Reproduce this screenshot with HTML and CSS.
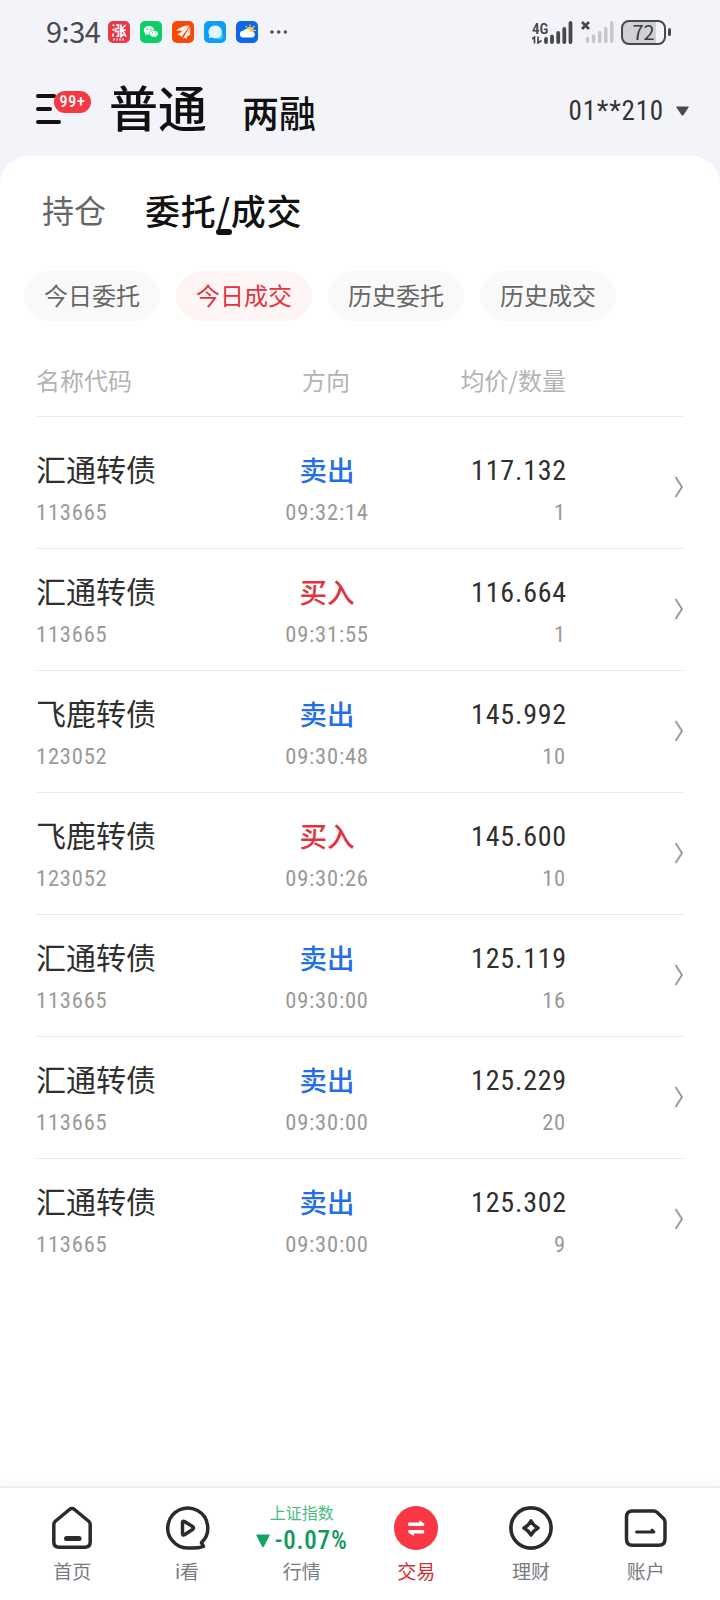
FILE: index.html
```html
<!DOCTYPE html>
<html lang="zh-CN">
<head>
    <meta charset="UTF-8">
    <meta name="viewport" content="width=device-width, initial-scale=1.0">
    <title>今日成交</title>
    <link rel="stylesheet" href="styles.css">
</head>
<body>
    <div class="statusbar">
        <span class="clock">9:34</span>
        <div class="apps">
            <svg width="22" height="22" viewBox="0 0 22 22"><rect width="22" height="22" rx="5" fill="#e83849"/><path d="M5 3.500l1 1.500M8 4h2.500v3.500h-3v3h3v4.500l-2 .5M4.500 8l1.500 1.500M5 15.500v-3M13 3.500v12l2.500-2M17.500 4L13 8.500M11.500 9h6.500M14.500 9.500l3.500 6" stroke="#fff" stroke-width="1.700" fill="none"/><path d="M5 18.500h12" stroke="#ffc5c9" stroke-width="2" stroke-dasharray="2 1"/></svg>
            <svg width="22" height="22" viewBox="0 0 22 22"><rect width="22" height="22" rx="5" fill="#0bce66"/><path d="M9 5c-3 0-5.200 1.900-5.200 4.300 0 1.400.7 2.600 1.900 3.400l-.5 1.700 2-1c3.800.9 7-1.100 7-4.100C14.200 6.900 12 5 9 5z" fill="#fff"/><path d="M14 9.200c-2.600 0-4.500 1.600-4.500 3.600 0 2.300 2.700 4 5.700 3.300l1.600.8-.4-1.400c1.200-.7 1.900-1.700 1.900-2.800 0-2-1.900-3.500-4.300-3.500z" fill="#fff" stroke="#0bce66" stroke-width=".7"/><g fill="#0bce66"><circle cx="7.300" cy="8.300" r=".8"/><circle cx="10.700" cy="8.300" r=".8"/><circle cx="12.600" cy="11.800" r=".6"/><circle cx="15.600" cy="11.800" r=".6"/></g></svg>
            <svg width="22" height="22" viewBox="0 0 22 22"><rect width="22" height="22" rx="5" fill="#f94803"/><path d="M4 10Q9 4.500 17.500 4.500L10 10Q7 8.800 4 10z M5.500 13.500L17.500 5L9.500 16Q8.500 13.500 5.500 13.500z M11 17.500L17.800 5.500L14.500 18Q13 16.500 11 17.500z M15.500 15L18.200 6V14z" fill="#fff"/></svg>
            <svg width="22" height="22" viewBox="0 0 22 22"><rect width="22" height="22" rx="5" fill="#0c9cfb"/><circle cx="15.500" cy="15" r="3.500" fill="#35cefb"/><path d="M11 4.500a6.500 6.500 0 0 0-5.500 10l-.8 2.700 3-.9A6.500 6.500 0 1 0 11 4.500z" fill="#e3f5ff"/></svg>
            <svg width="22" height="22" viewBox="0 0 22 22"><rect width="22" height="22" rx="5" fill="#0c67ec"/><path d="M14 3.500v2M18.500 5l-1.500 1.500M20 9.500h-2M9.500 5l1.500 1.500" stroke="#f6cd50" stroke-width="1.200"/><circle cx="14" cy="9.500" r="3.800" fill="#fbc545"/><path d="M7.500 16.500a3.400 3.400 0 0 1-.3-6.800 4.300 4.300 0 0 1 7.600 1.300 2.900 2.900 0 1 1 .7 5.500z" fill="#fff"/></svg>
        </div>
        <svg class="more" width="20" height="6" viewBox="0 0 20 6"><g fill="#505154"><circle cx="3" cy="3" r="1.800"/><circle cx="9.700" cy="3" r="1.800"/><circle cx="16.400" cy="3" r="1.800"/></g></svg>
        <div class="signals">
            <div class="net">
                <span class="num">4G</span>
                <svg width="10" height="8" viewBox="0 0 10 8"><path d="M0 3l2.500-2v6.500M6 .5v6.500L9.500 4.500" stroke="#48494c" stroke-width="1.700" fill="none"/></svg>
            </div>
            <svg class="bars" width="30" height="23" viewBox="0 0 30 23"><path d="M2 18v3M8 15.500v5.500M14.200 12v9M20.300 8v13M26.500 2v19" stroke="#48494c" stroke-width="3.800" stroke-linecap="round"/></svg>
            <svg class="nosim" width="34" height="24" viewBox="0 0 34 24"><path d="M2 2l7 7M9 2L2 9" stroke="#48494c" stroke-width="2.800"/><path d="M7.500 18.500v3M13.600 16v5.500M19.700 12.500v9M25.800 8.500v13M31.800 2.500v19" stroke="#c7c8cb" stroke-width="3.500" stroke-linecap="round"/></svg>
            <div class="battery"><span>72</span></div>
            <i class="battery-cap"></i>
        </div>
    </div>

    <header class="header">
        <div class="menu">
            <svg width="27" height="32" viewBox="0 0 27 32"><path d="M2 3h16M2 16h12M2 29h21" stroke="#111" stroke-width="4" stroke-linecap="round"/></svg>
            <span class="badge num">99+</span>
        </div>
        <h1>普通</h1>
        <h2>两融</h2>
        <div class="account">
            <span class="num">01**210</span>
            <svg width="13" height="10" viewBox="0 0 13 10"><path d="M1 .5h11q1 0 .5 1L7.500 9q-1 1-2 0L.5 1.500Q0 .5 1 .5z" fill="#4a4b4d"/></svg>
        </div>
    </header>

    <main class="panel">
        <div class="tabs">
            <span class="tab">持仓</span>
            <span class="tab active">委托/成交</span>
        </div>
        <div class="filters">
            <span class="chip">今日委托</span>
            <span class="chip selected">今日成交</span>
            <span class="chip">历史委托</span>
            <span class="chip">历史成交</span>
        </div>

        <div class="list">
            <div class="list-head">
                <span>名称代码</span>
                <span class="center">方向</span>
                <span class="right">均价/数量</span>
            </div>
            <div id="rows" class="rows"></div>
        </div>
    </main>

    <nav class="tabbar">
        <div class="nav-item">
            <svg width="44" height="44" viewBox="0 0 44 44" fill="none" stroke="#2b2b2b" stroke-width="3.500" stroke-linejoin="round" stroke-linecap="round"><path d="M19.500 3.500Q22 1.500 24.500 3.500L39 15.500Q40.200 16.600 40.200 18.500V36Q40.200 41.200 35 41.200H9Q3.800 41.200 3.800 36V18.500Q3.800 16.600 5 15.500z"/><path d="M16.500 32.500h12.500" stroke-width="5"/></svg>
            <span>首页</span>
        </div>
        <div class="nav-item">
            <svg width="46" height="44" viewBox="0 0 46 44" fill="none" stroke="#2b2b2b" stroke-width="3.500" stroke-linejoin="round" stroke-linecap="round"><path d="M37.800 36.300A20 20 0 1 0 25 42Q34 42.500 39.500 40.300L37.500 36.800"/><path d="M18.500 16.500Q18.500 14.500 20.500 15.500L28.500 20.500Q30.500 22 28.500 23.500L20.500 28.800Q18.500 29.800 18.500 27.500z"/></svg>
            <span>i看</span>
        </div>
        <div class="nav-item market">
            <span class="index-name">上证指数</span>
            <span class="index-rate num"><svg width="14" height="14" viewBox="0 0 14 14"><path d="M1 .5h12q1 0 .6 1L8 12.500q-1 1.500-2 0L.4 1.500Q0 .5 1 .5z" fill="#10a660"/></svg>-0.07%</span>
            <span>行情</span>
        </div>
        <div class="nav-item current">
            <svg width="44" height="44" viewBox="0 0 44 44"><circle cx="22" cy="22" r="22" fill="#fa3745"/><path d="M14.500 16.500h11v-2.500l4.500 3.500q1 2.500-1 2.500H14.500q-1-1.700 0-3.500zM15 24h14.500q1.500 1.700 0 3.500H20v2.500l-4.500-2.500Q13 25 15 24z" fill="#fff"/></svg>
            <span>交易</span>
        </div>
        <div class="nav-item">
            <svg width="44" height="44" viewBox="0 0 44 44" fill="none" stroke="#2b2b2b" stroke-width="3.600" stroke-linejoin="round"><circle cx="22" cy="22" r="20.100"/><path d="M22 15Q24.500 19.500 29 22Q24.500 24.500 22 29Q19.500 24.500 15 22Q19.500 19.500 22 15z"/></svg>
            <span>理财</span>
        </div>
        <div class="nav-item">
            <svg width="44" height="44" viewBox="0 0 44 44" fill="none" stroke="#2b2b2b" stroke-width="3.500" stroke-linejoin="round" stroke-linecap="round"><path d="M8.500 5H29.500Q31.500 5 33 6.300L39.500 12.500Q41 14 41 16V33Q41 39.300 34.700 39.300H8.500Q2.500 39.300 2.500 33V11Q2.500 5 8.500 5z"/><path d="M12.500 26h17.500l-2-2" stroke-width="2.800"/></svg>
            <span>账户</span>
        </div>
    </nav>

    <script>
        const trades = [
            { name: "汇通转债", code: "113665", side: "卖出", time: "09:32:14", price: "117.132", qty: 1 },
            { name: "汇通转债", code: "113665", side: "买入", time: "09:31:55", price: "116.664", qty: 1 },
            { name: "飞鹿转债", code: "123052", side: "卖出", time: "09:30:48", price: "145.992", qty: 10 },
            { name: "飞鹿转债", code: "123052", side: "买入", time: "09:30:26", price: "145.600", qty: 10 },
            { name: "汇通转债", code: "113665", side: "卖出", time: "09:30:00", price: "125.119", qty: 16 },
            { name: "汇通转债", code: "113665", side: "卖出", time: "09:30:00", price: "125.229", qty: 20 },
            { name: "汇通转债", code: "113665", side: "卖出", time: "09:30:00", price: "125.302", qty: 9 }
        ];

        document.getElementById('rows').innerHTML = trades.map(t => `
            <div class="row">
                <div class="cell">
                    <span class="name">${t.name}</span>
                    <span class="sub num">${t.code}</span>
                </div>
                <div class="cell center">
                    <span class="side ${t.side === "买入" ? "buy" : "sell"}">${t.side}</span>
                    <span class="sub num">${t.time}</span>
                </div>
                <div class="cell right">
                    <span class="price num">${t.price}</span>
                    <span class="sub num">${t.qty}</span>
                </div>
                <svg class="arrow" width="10" height="22" viewBox="0 0 10 22"><path d="M1.500 1l6.500 10-6.500 10" stroke="#999" stroke-width="1.900" fill="none"/></svg>
            </div>`).join('');
    </script>
</body>
</html>
```

FILE: styles.css
```css
* {
    box-sizing: border-box;
}

body {
    margin: 0;
    height: 1600px;
    display: flex;
    flex-direction: column;
    overflow: hidden;
    background-color: #f3f4f9;
    color: #111;
    font-family: "Noto Sans CJK SC", sans-serif;
}

svg {
    display: block;
    flex: none;
}

.num {
    font-family: Roboto, "Noto Sans CJK SC", sans-serif;
    font-stretch: 87%;
    letter-spacing: 0.8px;
}

/* status bar */
.statusbar {
    height: 64px;
    padding: 0 49px 0 46px;
    display: flex;
    align-items: center;
}

.clock {
    width: 62px;
    font-size: 29px;
    line-height: 60px;
    height: 64px;
    letter-spacing: -0.5px;
    color: #48494c;
}

.apps {
    display: flex;
    gap: 10px;
}

.more {
    margin-left: 11px;
}

.signals {
    margin-left: auto;
    display: flex;
    align-items: center;
}

.net {
    width: 12px;
    line-height: 14px;
    color: #48494c;
}

.net .num {
    font-size: 15px;
    font-weight: 600;
    letter-spacing: 0;
}

.nosim {
    margin: 0 7px 0 6px;
}

.battery {
    width: 45px;
    height: 25px;
    border: 2px solid #48494c;
    border-radius: 8px;
    background: linear-gradient(90deg, #d0d1d4 80%, #f3f4f9 80%);
    font-size: 20px;
    line-height: 19px;
    text-align: center;
    color: #38393c;
}

.battery-cap {
    width: 3px;
    height: 8px;
    margin-left: 2px;
    border-radius: 2px;
    background-color: #48494c;
}

/* header */
.header {
    height: 92px;
    padding: 0 31px 0 36px;
    display: flex;
}

.menu {
    position: relative;
    width: 73px;
    padding-top: 29px;
}

.badge {
    position: absolute;
    left: 18px;
    top: 27px;
    width: 37px;
    height: 22px;
    border-radius: 11px;
    background-color: #f43945;
    color: #fff;
    font-size: 16px;
    font-weight: 500;
    line-height: 22px;
    text-align: center;
}

h1, h2 {
    margin: 0;
    font-weight: 500;
}

h1 {
    font-size: 49px;
    line-height: 83px;
}

h2 {
    margin-left: 35px;
    font-size: 37px;
    line-height: 97px;
}

.account {
    margin-left: auto;
    height: 94px;
    display: flex;
    align-items: center;
    gap: 12px;
    font-size: 27px;
    color: #333;
}

.account svg {
    margin-top: -1px;
}

/* main panel */
.panel {
    flex: 1;
    border-radius: 28px 28px 0 0;
    background-color: #fff;
}

.tabs {
    height: 115px;
    padding-left: 42px;
    display: flex;
    gap: 39px;
}

.tab {
    font-size: 32px;
    line-height: 107px;
    color: #666;
}

.tab.active {
    position: relative;
    font-size: 35px;
    font-weight: 500;
    letter-spacing: 0.7px;
    color: #111;
}

.tab.active::after {
    content: "";
    position: absolute;
    left: 50%;
    top: 73px;
    width: 16px;
    height: 6px;
    margin-left: -8px;
    border-radius: 3px;
    background-color: #111;
}

.filters {
    padding-left: 24px;
    display: flex;
    gap: 16px;
}

.chip {
    width: 136px;
    height: 50px;
    border-radius: 25px;
    background-color: #f9f9f9;
    font-size: 24px;
    line-height: 47px;
    text-align: center;
    color: #666;
}

.chip.selected {
    background-color: #fff5f4;
    color: #e0343f;
}

.list {
    padding: 0 36px;
}

.list-head,
.row {
    display: grid;
    grid-template-columns: 190px 200px 140px 1fr;
}

.list-head {
    height: 96px;
    padding-top: 37px;
    border-bottom: 1px solid #ebebeb;
    font-size: 24px;
    line-height: 44px;
    color: #b3b3b3;
}

.center {
    text-align: center;
}

.right {
    text-align: right;
}

.rows {
    padding-top: 10px;
}

.row {
    height: 122px;
    padding-top: 21px;
    border-bottom: 1px solid #ebebeb;
}

.row:last-child {
    border-bottom: 0;
}

.cell {
    display: flex;
    flex-direction: column;
}

.cell.center {
    padding-left: 2px;
}

.name,
.side,
.price {
    height: 44px;
    line-height: 41px;
}

.name {
    font-size: 30px;
    color: #2f2f2f;
}

.side {
    font-size: 27.500px;
    font-weight: 500;
    line-height: 42px;
}

.sell {
    color: #246fe5;
}

.buy {
    color: #e03440;
}

.price {
    margin-right: -1px;
    font-size: 28px;
    line-height: 46px;
    color: #2f2f2f;
}

.sub {
    font-size: 22.500px;
    line-height: 40px;
    color: #999;
}

.arrow {
    justify-self: end;
    margin: 28px 0 0;
}

/* bottom bar */
.tabbar {
    height: 114px;
    padding: 18px 17px 0 15px;
    display: grid;
    grid-template-columns: repeat(6, 1fr);
    border-top: 2px solid #eee;
    background-color: #fff;
    box-shadow: 0 -4px 12px rgba(0, 0, 0, 0.03);
}

.nav-item {
    display: flex;
    flex-direction: column;
    align-items: center;
    font-size: 19px;
    line-height: 42px;
    color: #777b82;
}

.nav-item.current {
    color: #d22f35;
}

.market .index-name {
    height: 16px;
    font-size: 16px;
    line-height: 12px;
    color: #48bc84;
}

.market .index-rate {
    height: 28px;
    display: flex;
    align-items: center;
    gap: 5px;
    padding-top: 10px;
    font-size: 25px;
    font-weight: 500;
    line-height: 28px;
    color: #109a5b;
}
```
